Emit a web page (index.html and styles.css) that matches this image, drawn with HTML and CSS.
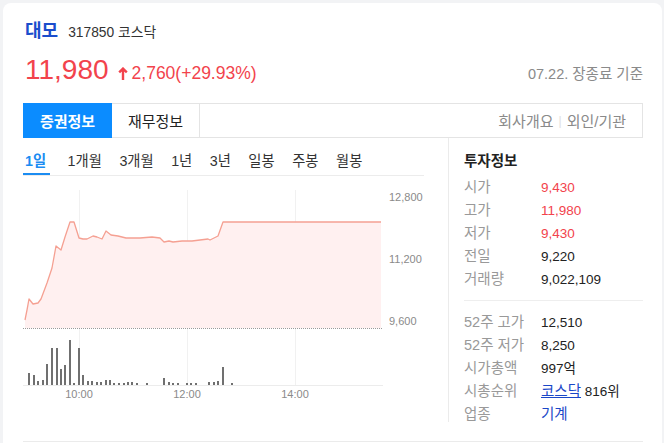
FILE: index.html
```html
<!DOCTYPE html>
<html lang="ko">
<head>
<meta charset="utf-8">
<link rel="stylesheet" href="styles.css">
</head>
<body>
<div class="card">
  <div class="title-row">
    <span class="name">대모</span>
    <span class="code">317850 코스닥</span>
  </div>
  <div class="price-row">
    <div class="price-left">
      <span class="price">11,980</span>
      <svg class="arrow" width="10" height="13" viewBox="0 0 10 13"><path d="M1.2 5.4 L5 1.6 L8.8 5.4 M5 2 V13" fill="none" stroke="#f2434c" stroke-width="2.4"/></svg>
      <span class="change">2,760(+29.93%)</span>
    </div>
    <span class="asof">07.22. 장종료 기준</span>
  </div>
  <div class="tabs">
    <span class="tab active">증권정보</span>
    <span class="tab">재무정보</span>
    <div class="tab-links">
      <span>회사개요</span><span class="sep">|</span><span>외인/기관</span>
    </div>
  </div>
  <div class="body">
    <div class="left">
      <div class="periods">
        <span class="period on">1일</span>
        <span class="period">1개월</span>
        <span class="period">3개월</span>
        <span class="period">1년</span>
        <span class="period">3년</span>
        <span class="period">일봉</span>
        <span class="period">주봉</span>
        <span class="period">월봉</span>
      </div>
      <svg class="chart" width="401" height="246" viewBox="23 176 401 246">
        <g stroke="#f1f1f1" stroke-width="1">
          <line x1="79.5" y1="190" x2="79.5" y2="385"/>
          <line x1="187.5" y1="190" x2="187.5" y2="385"/>
          <line x1="295.5" y1="190" x2="295.5" y2="385"/>
        </g>
        <polygon fill="#fff0f0" points="25,320 27,310 29,299 33,304 38,303 41,299 47,283 52,268 56,246 61,250 65,237 70,222 74,222 79,238 83,239 87,239 93,236 97,237 102,239 106,231 111,235 118,236 126,238 140,238 152,237 160,238 164,242 169,241 173,242 182,241 192,241 200,240 208,239 210,240 218,236 223,222 381,222 381,328 25,328"/>
        <polyline fill="none" stroke="#f5a092" stroke-width="1.3" stroke-linejoin="round" points="25,320 27,310 29,299 33,304 38,303 41,299 47,283 52,268 56,246 61,250 65,237 70,222 74,222 79,238 83,239 87,239 93,236 97,237 102,239 106,231 111,235 118,236 126,238 140,238 152,237 160,238 164,242 169,241 173,242 182,241 192,241 200,240 208,239 210,240 218,236 223,222 381,222"/>
        <line x1="23" y1="328.5" x2="383" y2="328.5" stroke="#9a9a9a" stroke-width="1" stroke-dasharray="1 1"/>
        <g class="ylab">
          <text x="389" y="201">12,800</text>
          <text x="389" y="263">11,200</text>
          <text x="389" y="325">9,600</text>
        </g>
        <g fill="#707070">
          <rect x="28" y="373" width="2" height="12"/>
          <rect x="33" y="375" width="2" height="10"/>
          <rect x="37" y="381" width="2" height="4"/>
          <rect x="42" y="380" width="2" height="5"/>
          <rect x="46" y="364" width="2" height="21"/>
          <rect x="51" y="348" width="2" height="37"/>
          <rect x="56" y="348" width="2" height="37"/>
          <rect x="60" y="369" width="2" height="16"/>
          <rect x="64" y="365" width="2" height="20"/>
          <rect x="69" y="340" width="2" height="45"/>
          <rect x="73" y="383" width="2" height="2"/>
          <rect x="78" y="348" width="2" height="37"/>
          <rect x="82" y="375" width="2" height="10"/>
          <rect x="87" y="381" width="2" height="4"/>
          <rect x="91" y="381" width="2" height="4"/>
          <rect x="96" y="382" width="2" height="3"/>
          <rect x="100" y="382" width="2" height="3"/>
          <rect x="105" y="380" width="2" height="5"/>
          <rect x="109" y="380" width="2" height="5"/>
          <rect x="113" y="383" width="2" height="2"/>
          <rect x="118" y="383" width="2" height="2"/>
          <rect x="123" y="383" width="2" height="2"/>
          <rect x="127" y="382" width="2" height="3"/>
          <rect x="131" y="382" width="2" height="3"/>
          <rect x="136" y="383" width="2" height="2"/>
          <rect x="146" y="383" width="2" height="2"/>
          <rect x="163" y="378" width="2" height="7"/>
          <rect x="168" y="382" width="2" height="3"/>
          <rect x="172" y="383" width="2" height="2"/>
          <rect x="177" y="383" width="2" height="2"/>
          <rect x="186" y="383" width="2" height="2"/>
          <rect x="190" y="383" width="2" height="2"/>
          <rect x="195" y="383" width="2" height="2"/>
          <rect x="208" y="382" width="2" height="3"/>
          <rect x="213" y="382" width="2" height="3"/>
          <rect x="217" y="381" width="2" height="4"/>
          <rect x="222" y="367" width="2" height="18"/>
          <rect x="231" y="383" width="2" height="2"/>
        </g>
        <line x1="23" y1="385.5" x2="383" y2="385.5" stroke="#ececec" stroke-width="1"/>
        <g class="xlab">
          <text x="79" y="398">10:00</text>
          <text x="187" y="398">12:00</text>
          <text x="295" y="398">14:00</text>
        </g>
      </svg>
    </div>
    <div class="right">
      <div class="info-title">투자정보</div>
      <dl class="info">
        <div class="row"><dt>시가</dt><dd class="up">9,430</dd></div>
        <div class="row"><dt>고가</dt><dd class="up">11,980</dd></div>
        <div class="row"><dt>저가</dt><dd class="up">9,430</dd></div>
        <div class="row"><dt>전일</dt><dd>9,220</dd></div>
        <div class="row"><dt>거래량</dt><dd>9,022,109</dd></div>
      </dl>
      <dl class="info second">
        <div class="row"><dt>52주 고가</dt><dd>12,510</dd></div>
        <div class="row"><dt>52주 저가</dt><dd>8,250</dd></div>
        <div class="row"><dt>시가총액</dt><dd>997억</dd></div>
        <div class="row"><dt>시총순위</dt><dd><a class="link under">코스닥</a> 816위</dd></div>
        <div class="row"><dt>업종</dt><dd><a class="link">기계</a></dd></div>
      </dl>
    </div>
  </div>
  <div class="bottom-line"></div>
</div>
</body>
</html>
```
FILE: styles.css
```css
* { box-sizing: border-box; }
html, body { margin: 0; padding: 0; }
body {
  background: #f2f3f5;
  font-family: "Liberation Sans", "Noto Sans CJK KR", sans-serif;
  color: #222;
  overflow: hidden;
  height: 443px;
}
.card {
  margin: 3px 2px 0 3px;
  background: #fff;
  border-radius: 8px;
  padding: 15px 19px 0 20px;
  min-height: 480px;
}
.title-row {
  display: flex;
  align-items: baseline;
  height: 26px;
  line-height: 26px;
}
.name {
  font-size: 18px;
  font-weight: 700;
  color: #1a4dcc;
  margin-left: 2px;
  margin-right: 10px;
}
.code {
  font-size: 13.8px;
  color: #333;
}
.price-row {
  display: flex;
  justify-content: space-between;
  align-items: baseline;
  margin-top: 10px;
  height: 32px;
  line-height: 32px;
}
.price-left {
  display: flex;
  align-items: baseline;
  margin-left: 2px;
}
.price {
  font-size: 28px;
  color: #f2434c;
}
.arrow {
  margin-left: 9px;
  margin-right: 4px;
  align-self: center;
  position: relative;
  top: 2px;
}
.change {
  font-size: 17.5px;
  color: #f2434c;
}
.asof {
  font-size: 14.5px;
  color: #8a8a8a;
}
.tabs {
  display: flex;
  align-items: stretch;
  margin-top: 17px;
  height: 35px;
  border: 1px solid #e4e4e4;
}
.tab {
  width: 88px;
  display: flex;
  align-items: center;
  justify-content: center;
  font-size: 15px;
  color: #222;
  border-right: 1px solid #e4e4e4;
}
.tab.active {
  background: #0b8cff;
  color: #fff;
  font-weight: 700;
  width: 89px;
  margin: -1px 0 -1px -1px;
  border-right: none;
}
.tab-links {
  margin-left: auto;
  display: flex;
  align-items: center;
  padding-right: 16px;
  font-size: 15px;
  color: #8a8a8a;
}
.tab-links .sep {
  color: #dedede;
  margin: 0 5px;
  font-size: 12px;
}
.body {
  display: flex;
  height: 284px;
}
.left {
  width: 425px;
  padding-right: 24px;
}
.periods {
  display: flex;
  gap: 17.5px;
  height: 38px;
  border-bottom: 1px solid #ececec;
}
.period {
  font-size: 14.3px;
  line-height: 20px;
  padding-top: 13px;
  color: #333;
}
.period.on {
  color: #1b8cf2;
  font-weight: 700;
  padding: 13px 4px 0 2px;
  border-bottom: 2px solid #1b8cf2;
  height: 37px;
}
.chart {
  display: block;
}
.ylab text {
  font-family: "Liberation Sans", sans-serif;
  font-size: 11px;
  fill: #8a8a8a;
}
.xlab text {
  font-family: "Liberation Sans", sans-serif;
  font-size: 11px;
  fill: #8a8a8a;
  text-anchor: middle;
}
.right {
  flex: 1;
  border-left: 1px solid #ebebeb;
  padding-left: 15px;
}
.info-title {
  font-size: 14.5px;
  font-weight: 700;
  padding-top: 13px;
  line-height: 20px;
  color: #222;
}
.info {
  margin: 5px 0 0 0;
  padding-bottom: 9px;
  border-bottom: 1px solid #eeeeee;
}
.info.second {
  margin-top: 10px;
  border-bottom: none;
}
.row {
  display: flex;
  height: 23px;
  line-height: 23px;
  font-size: 13.5px;
}
dt {
  width: 77px;
  color: #999;
  font-size: 14.5px;
}
dd {
  margin: 0;
  color: #222;
}
dd.up { color: #f2434c; }
.link { color: #1a47c8; font-size: 14.5px; }
.link.under { text-decoration: underline; }
.bottom-line {
  margin-top: 19px;
  border-top: 1px solid #ebebeb;
}
```
